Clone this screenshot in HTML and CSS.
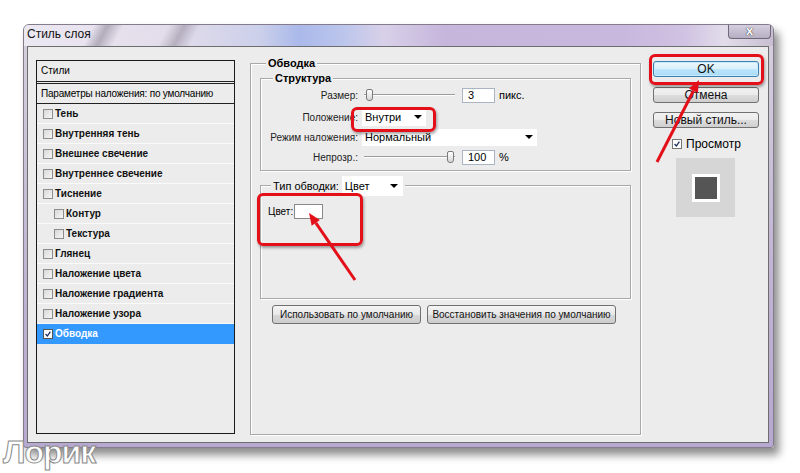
FILE: index.html
```html
<!DOCTYPE html>
<html lang="ru">
<head>
    <meta charset="UTF-8">
    <title>Стиль слоя</title>
    <link rel="stylesheet" href="styles.css">
</head>
<body>
    <div class="window">
        <div class="titlebar">
            <span class="title">Стиль слоя</span>
            <span class="close">x</span>
        </div>
        <div class="client">
            <div class="styles-list">
                <div class="list-head">Стили</div>
                <div class="list-blend">Параметры наложения: по умолчанию</div>
                <div class="item"><span class="cb"></span>Тень</div>
                <div class="item"><span class="cb"></span>Внутренняя тень</div>
                <div class="item"><span class="cb"></span>Внешнее свечение</div>
                <div class="item"><span class="cb"></span>Внутреннее свечение</div>
                <div class="item"><span class="cb"></span>Тиснение</div>
                <div class="item sub"><span class="cb"></span>Контур</div>
                <div class="item sub"><span class="cb"></span>Текстура</div>
                <div class="item"><span class="cb"></span>Глянец</div>
                <div class="item"><span class="cb"></span>Наложение цвета</div>
                <div class="item"><span class="cb"></span>Наложение градиента</div>
                <div class="item"><span class="cb"></span>Наложение узора</div>
                <div class="item active">
                    <span class="cb checked"><svg viewBox="0 0 10 10"><path d="M2 5 L4.2 7.5 L8 2"/></svg></span>Обводка
                </div>
            </div>

            <div class="group stroke-group">
                <span class="legend">Обводка</span>
                <div class="group struct">
                    <span class="legend">Структура</span>
                    <div class="row">
                        <span class="label">Размер:</span>
                        <div class="slider"><span class="thumb"></span></div>
                        <span class="field">3</span>
                        <span class="unit">пикс.</span>
                    </div>
                    <div class="row">
                        <span class="label">Положение:</span>
                        <div class="select pos-select">Внутри<span class="arrow"></span></div>
                    </div>
                    <div class="row">
                        <span class="label">Режим наложения:</span>
                        <div class="select mode-select">Нормальный<span class="arrow"></span></div>
                    </div>
                    <div class="row">
                        <span class="label">Непрозр.:</span>
                        <div class="slider full"><span class="thumb"></span></div>
                        <span class="field">100</span>
                        <span class="unit">%</span>
                    </div>
                </div>
                <div class="group fill">
                    <span class="legend fill-legend">Тип обводки: <span class="select type-select">Цвет<span class="arrow"></span></span></span>
                    <div class="color-row">Цвет: <span class="swatch"></span></div>
                </div>
                <div class="defaults">
                    <button class="btn-small use-btn">Использовать по умолчанию</button>
                    <button class="btn-small reset-btn">Восстановить значения по умолчанию</button>
                </div>
            </div>

            <div class="actions">
                <button class="btn ok">OK</button>
                <button class="btn">Отмена</button>
                <button class="btn new-style">Новый стиль...</button>
                <div class="preview-check">
                    <span class="cb checked"><svg viewBox="0 0 10 10"><path d="M2 5 L4.2 7.5 L8 2"/></svg></span>Просмотр
                </div>
                <div class="preview"><span class="preview-swatch"></span></div>
            </div>
        </div>
    </div>

    <div class="mark mark-pos"></div>
    <div class="mark mark-color"></div>
    <div class="mark mark-ok"></div>
    <svg class="arrows" width="800" height="473" viewBox="0 0 800 473">
        <line x1="355" y1="280" x2="315.8" y2="222.9"/>
        <polygon points="309,213 319.9,220.1 311.7,225.7"/>
        <line x1="657" y1="162" x2="693.5" y2="90.7"/>
        <polygon points="699,80 697.9,93 689,88.4"/>
    </svg>
    <div class="watermark">Лорик</div>
</body>
</html>
```

FILE: styles.css
```css
* {
    box-sizing: border-box;
}
body {
    margin: 0;
    width: 800px;
    height: 473px;
    overflow: hidden;
    position: relative;
    background-color: #fff;
    font-family: "Liberation Sans", Arial, sans-serif;
    font-size: 10px;
    color: #000;
}
.window {
    margin: 24px 0 0 23px;
    width: 751px;
    height: 424px;
    display: flex;
    flex-direction: column;
    padding: 0 4px 4px 3px;
    border: 1px solid #847c8c;
    border-radius: 6px 6px 3px 3px;
    background: linear-gradient(to bottom, #d6d0de, #bfb4d2 60%, #b6a8d0);
    box-shadow: 5px 7px 9px rgba(0, 0, 0, 0.45);
}
.titlebar {
    height: 21px;
    margin: 0 -4px 0 -3px;
    padding-left: 3px;
    display: flex;
    justify-content: space-between;
    border-radius: 5px 5px 0 0;
    background:
        linear-gradient(118deg, transparent 0 62px, rgba(80, 72, 92, 0.35) 74px, transparent 88px, transparent 128px, rgba(80, 72, 92, 0.3) 142px, transparent 156px),
        linear-gradient(90deg, #ece8f2 0, #e2dcea 150px, #ccd0ea 235px, #aab9ea 275px, #bcc6ec 320px, #d8d0e8 360px, #c6b6dc 420px, #c8b8de 600px, #d0c2e2 660px, #e2dcea 700px, #c6bed0 751px);
}
.title {
    align-self: center;
    margin-top: -3px;
    font-size: 12px;
    color: #111;
}
.close {
    width: 43px;
    height: 14px;
    margin-right: 2px;
    border: 1px solid #6f6878;
    border-top: none;
    border-radius: 0 0 4px 4px;
    background: linear-gradient(#d4cede, #b6aec2);
    color: #fff;
    font-weight: bold;
    font-size: 13px;
    line-height: 11px;
    text-align: center;
    text-shadow: 0 0 1px #333, 0 0 1px #333;
}
.client {
    flex: 1;
    display: flex;
    align-items: flex-start;
    padding: 13px 0 0 8px;
    border: 1px solid #6d6d6d;
    background-color: #ececec;
}

/* styles list */
.styles-list {
    width: 199px;
    height: 374px;
    border: 1px solid #1a1a1a;
    background-color: #ececec;
}
.list-head {
    height: 21px;
    line-height: 20px;
    padding-left: 4px;
    border-bottom: 1px solid #222;
}
.list-blend {
    height: 21px;
    margin-top: 1px;
    line-height: 19px;
    padding-left: 4px;
    border-top: 1px solid #222;
    border-bottom: 1px solid #222;
    letter-spacing: -0.2px;
}
.item {
    height: 20px;
    display: flex;
    align-items: center;
    padding-left: 6px;
    border-bottom: 1px solid #fafafa;
    font-weight: bold;
    color: #111;
}
.item.sub {
    padding-left: 17px;
}
.item.active {
    background-color: #3399ff;
    color: #fff;
    border-bottom-color: #3399ff;
}
.cb {
    width: 10px;
    height: 10px;
    margin-right: 2px;
    flex: none;
    border: 1px solid #8c8c8c;
    background: linear-gradient(135deg, #d8d8d8, #f6f6f6);
}
.cb.checked {
    background: #fff;
    border-color: #555;
}
.cb svg {
    display: block;
    width: 8px;
    height: 8px;
}
.cb svg path {
    fill: none;
    stroke: #1b2b5a;
    stroke-width: 1.6;
}

/* stroke group */
.group {
    border: 1px solid #a8a8a8;
    box-shadow: inset 1px 1px 0 #fff, 1px 1px 0 #fff;
}
.legend {
    display: table;
    margin: -7px 0 0 15px;
    padding: 0 2px;
    line-height: 13px;
    background-color: #ececec;
    font-weight: bold;
    font-size: 11px;
}
.stroke-group {
    width: 391px;
    height: 372px;
    margin: 3px 0 0 15px;
}
.struct {
    margin: 8px 9px 0 9px;
    padding-bottom: 3px;
}
.struct .legend {
    margin-left: 12px;
}
.row {
    height: 20px;
    display: flex;
    align-items: center;
}
.row:nth-child(3) {
    margin-top: 2px;
}
.label {
    width: 97px;
    margin-right: 4px;
    text-align: right;
    color: #222;
}
.slider {
    width: 91px;
    height: 12px;
    margin-left: 2px;
    display: flex;
    align-items: center;
    padding-left: 2px;
    background: linear-gradient(#9c9c9c, #9c9c9c) 0 5px / 100% 1px no-repeat,
                linear-gradient(#fff, #fff) 0 6px / 100% 1px no-repeat;
}
.slider.full {
    justify-content: flex-end;
    padding: 0 1px 0 0;
}
.thumb {
    width: 7px;
    height: 12px;
    border: 1px solid #7a7a7a;
    border-radius: 2px 2px 3px 3px;
    background: linear-gradient(#fff, #d6d6d6);
}
.field {
    width: 33px;
    height: 15px;
    margin-left: 7px;
    padding-left: 5px;
    line-height: 13px;
    border: 1px solid #a9b5c4;
    background-color: #fff;
    font-size: 11px;
}
.unit {
    margin-left: 4px;
    font-size: 11px;
}
.select {
    height: 17px;
    display: flex;
    align-items: center;
    justify-content: space-between;
    padding: 0 4px 0 3px;
    background-color: #fff;
    font-size: 11px;
    font-weight: normal;
}
.pos-select {
    width: 64px;
}
.mode-select {
    width: 175px;
}
.arrow {
    width: 0;
    height: 0;
    border-left: 4px solid transparent;
    border-right: 4px solid transparent;
    border-top: 4px solid #000;
}
.fill {
    height: 114px;
    margin: 14px 9px 0 9px;
}
.fill-legend {
    display: flex;
    width: max-content;
    align-items: center;
    margin: -10px 0 0 10px;
    font-weight: normal;
}
.type-select {
    width: 61px;
    height: 20px;
    margin-left: 3px;
    padding-right: 5px;
}
.color-row {
    height: 20px;
    margin-top: 5px;
    padding-left: 7px;
    display: flex;
    align-items: center;
    font-size: 10px;
}
.swatch {
    width: 29px;
    height: 15px;
    margin-left: 1px;
    border: 1px solid #8a8a8a;
    background-color: #fff;
}
.defaults {
    display: flex;
    gap: 6px;
    margin: 6px 0 0 21px;
}
.btn-small {
    height: 19px;
    padding: 0;
    border: 1px solid #707070;
    border-radius: 3px;
    background: linear-gradient(#f4f4f4, #e8e8e8 50%, #d8d8d8 51%, #cdcdcd);
    font-family: "Liberation Sans", Arial, sans-serif;
    font-size: 10px;
    white-space: nowrap;
    color: #111;
}
.use-btn {
    width: 149px;
}
.reset-btn {
    width: 189px;
}

/* right column */
.actions {
    width: 106px;
    margin: 1px 0 0 12px;
    display: flex;
    flex-direction: column;
}
.btn {
    height: 16px;
    padding: 0;
    border: 1px solid #707070;
    border-radius: 3px;
    background: linear-gradient(#f2f2f2, #ebebeb 50%, #dddddd 51%, #cfcfcf);
    font-family: "Liberation Sans", Arial, sans-serif;
    font-size: 12px;
    line-height: 14px;
    color: #111;
}
.btn + .btn {
    margin-top: 10px;
}
.btn.ok {
    border-color: #3c7fb1;
    background: linear-gradient(#eaf6fd, #d9f0fc 50%, #bee6fd 51%, #a7d9f5);
    box-shadow: inset 0 0 0 1px #c8ecfc;
}
.btn.new-style {
    margin-top: 9px;
}
.preview-check {
    display: flex;
    align-items: center;
    margin: 9px 0 0 19px;
    font-size: 12px;
}
.preview-check .cb {
    margin-right: 4px;
    border-color: #777;
}
.preview {
    width: 59px;
    height: 59px;
    margin: 7px 0 0 23px;
    display: flex;
    align-items: center;
    justify-content: center;
    background-color: #d6d6d6;
}
.preview-swatch {
    width: 28px;
    height: 28px;
    border: 3px solid #fff;
    background-color: #555;
}

/* annotations */
.mark {
    position: absolute;
    border: 3px solid #e3101a;
    border-radius: 6px;
    box-shadow: 1px 2px 3px rgba(0, 0, 0, 0.35);
}
.mark-pos {
    left: 351px;
    top: 107px;
    width: 85px;
    height: 25px;
}
.mark-color {
    left: 257px;
    top: 193px;
    width: 106px;
    height: 53px;
}
.mark-ok {
    left: 649px;
    top: 54px;
    width: 115px;
    height: 31px;
}
.arrows {
    position: absolute;
    left: 0;
    top: 0;
    pointer-events: none;
}
.arrows line {
    stroke: #e3101a;
    stroke-width: 3;
}
.arrows polygon {
    fill: #e3101a;
}
.watermark {
    position: absolute;
    left: 3px;
    top: 434px;
    font-size: 32px;
    font-weight: bold;
    letter-spacing: -1px;
    color: #fff;
    -webkit-text-stroke: 1px #8a8a8a;
}
```
